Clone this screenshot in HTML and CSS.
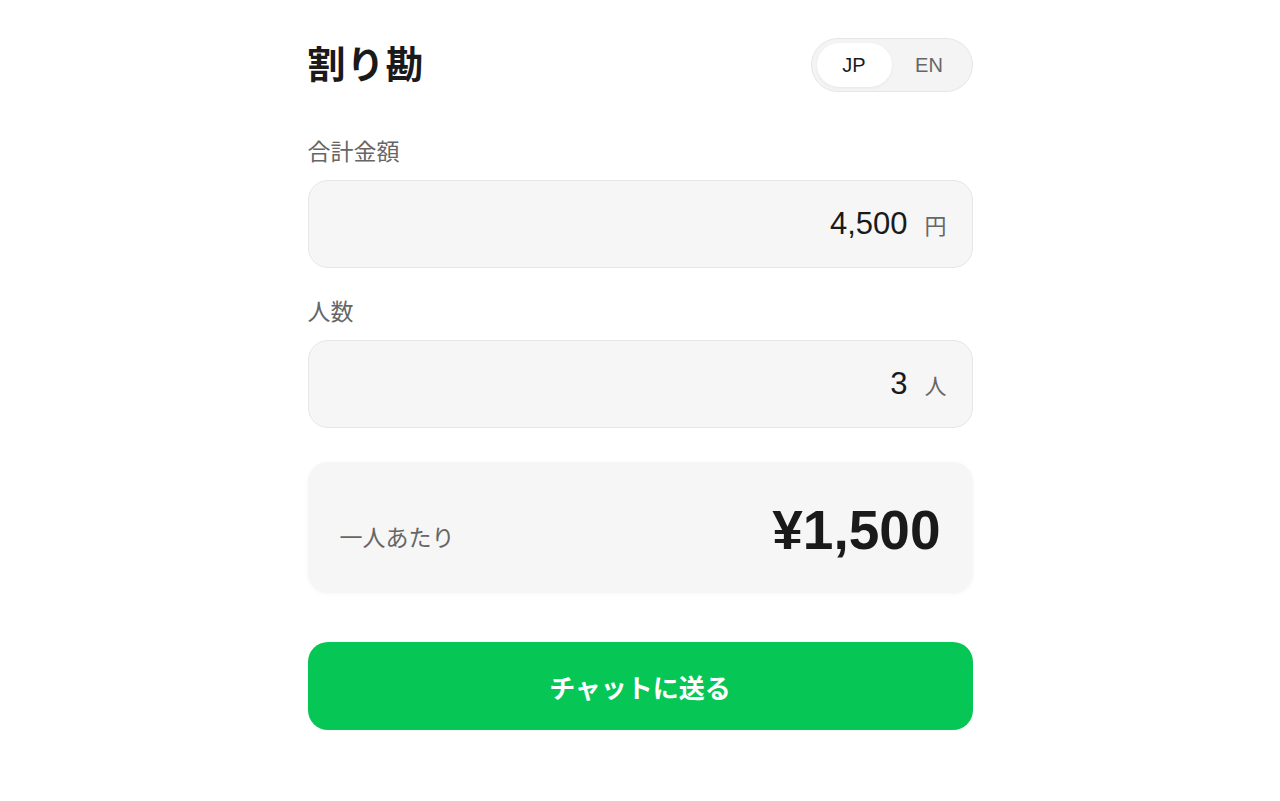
FILE: index.html
```html
<!DOCTYPE html>
<html lang="ja">
<head>
    <meta charset="UTF-8">
    <meta name="viewport" content="width=device-width, initial-scale=1.0">
    <title>割り勘</title>
    <link rel="stylesheet" href="styles.css">
</head>
<body>
    <div class="container">
        <div class="header">
            <h1>割り勘</h1>
            <div class="lang-toggle">
                <button type="button" class="lang active">JP</button>
                <button type="button" class="lang">EN</button>
            </div>
        </div>

        <label class="field-label" for="total">合計金額</label>
        <div class="field">
            <input type="text" id="total" value="4,500">
            <span class="unit">円</span>
        </div>

        <label class="field-label" for="people">人数</label>
        <div class="field">
            <input type="text" id="people" value="3">
            <span class="unit">人</span>
        </div>

        <div class="result">
            <span class="result-label">一人あたり</span>
            <span class="result-value">¥1,500</span>
        </div>

        <button type="button" class="send-button">チャットに送る</button>
    </div>
</body>
</html>
```

FILE: styles.css
```css
body {
    margin: 0;
    background: #fff;
    color: #1a1a1a;
    font-family: "Liberation Sans", Arial, "Noto Sans CJK JP", sans-serif;
}
.container {
    width: 665px;
    margin: 0 auto;
    padding-top: 38px;
}
.header {
    display: flex;
    justify-content: space-between;
    align-items: center;
    height: 54px;
}
h1 {
    margin: 0;
    font-size: 38px;
    line-height: 48px;
    font-weight: bold;
    letter-spacing: 1px;
}
.lang-toggle {
    display: flex;
    padding: 4px 5px;
    background: #f4f4f4;
    border: 1px solid #e6e6e6;
    border-radius: 27px;
}
.lang {
    width: 75px;
    height: 44px;
    border: none;
    border-radius: 22px;
    background: transparent;
    font-family: inherit;
    font-size: 20px;
    color: #666;
}
.lang.active {
    background: #fff;
    color: #1a1a1a;
    box-shadow: 0 1px 3px rgba(0, 0, 0, 0.06);
}
.field-label {
    display: block;
    margin-top: 46px;
    font-size: 23px;
    line-height: 28px;
    color: #666;
}
.field-label + .field {
    margin-top: 14px;
}
.field + .field-label {
    margin-top: 30px;
}
.field {
    display: flex;
    align-items: center;
    height: 86px;
    padding: 0 25px 0 24px;
    background: #f6f6f6;
    border: 1px solid #e6e6e6;
    border-radius: 20px;
}
.field input {
    flex: 1;
    min-width: 0;
    border: none;
    background: transparent;
    text-align: right;
    font-family: inherit;
    font-size: 31px;
    color: #1a1a1a;
    outline: none;
    padding: 0;
}
.unit {
    margin-left: 17px;
    font-size: 22px;
    color: #666;
}
.result {
    display: flex;
    justify-content: space-between;
    align-items: baseline;
    margin-top: 34px;
    padding: 38px 32px 33px 32px;
    background: #f6f6f6;
    border-radius: 20px;
    box-shadow: 0 1px 4px rgba(0, 0, 0, 0.04);
}
.result-label {
    font-size: 23px;
    color: #666;
    position: relative;
    top: -3px;
}
.result-value {
    font-size: 55px;
    line-height: 60px;
    font-weight: bold;
}
.send-button {
    display: block;
    width: 100%;
    height: 88px;
    margin-top: 49px;
    border: none;
    border-radius: 20px;
    background: #06c755;
    color: #fff;
    font-family: inherit;
    font-size: 26px;
    font-weight: bold;
    cursor: pointer;
}
```
